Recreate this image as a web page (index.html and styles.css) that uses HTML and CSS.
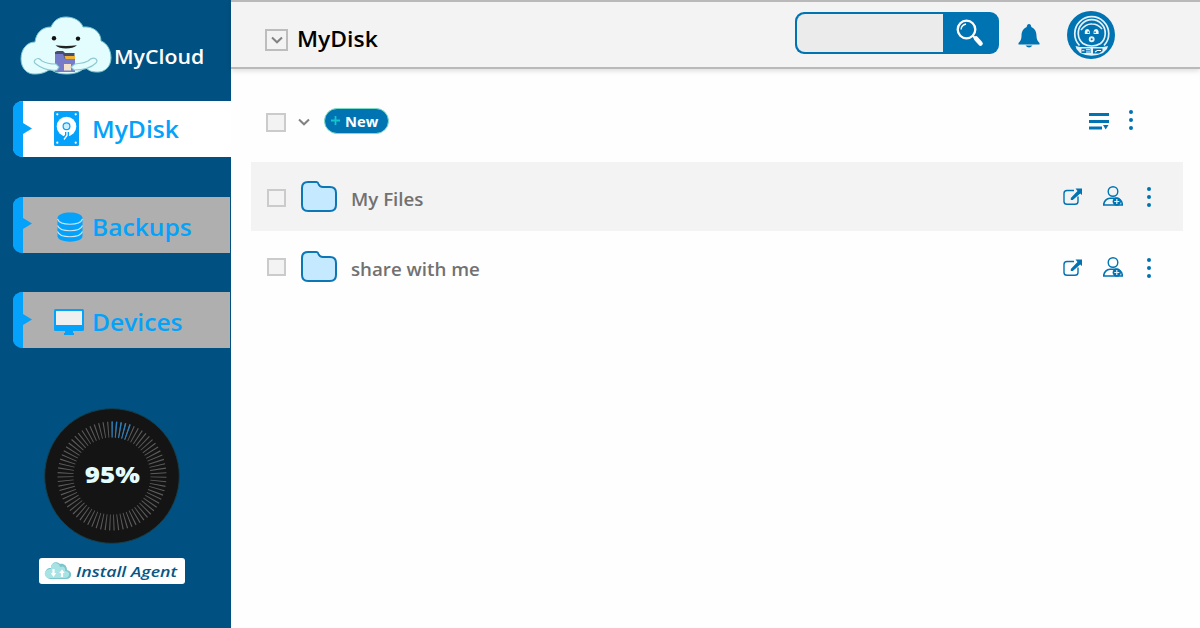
FILE: index.html
```
<!DOCTYPE html>
<html lang="en">
<head>
<meta charset="utf-8">
<title>MyCloud</title>
<link rel="stylesheet" href="styles.css">
</head>
<body>
<svg width="0" height="0" class="defs">
  <defs>
    <symbol id="folder" viewBox="0 0 36 32"><path d="M1 7Q1 1 7 1H15.500Q17 1 17.500 3Q18.500 6 22 6H29Q35 6 35 12V24Q35 30 29 30H7Q1 30 1 24Z" fill="#c5e9ff" stroke="#0d76b5" stroke-width="2"/></symbol>
    <symbol id="open" viewBox="0 0 20 18"><path d="M11 2.500H4Q1 2.500 1 5.500V13.500Q1 16.300 4 16.300H12Q15 16.300 15 13.500V8.500" fill="none" stroke="#0073b3" stroke-width="1.400"/><path d="M12.500 .5H19V7L17.200 5.500L9.800 12H7.800V10L14.500 3Z" fill="#0073b3"/></symbol>
    <symbol id="user" viewBox="0 0 20 20"><circle cx="10" cy="5.500" r="4.800" fill="none" stroke="#0073b3" stroke-width="1.400"/><path d="M.7 19C.7 15 4 12.300 7 12.300H12.500C16.500 12.300 19.300 15 19.300 19Z" fill="none" stroke="#0073b3" stroke-width="1.600"/><circle cx="13.800" cy="15.500" r="4.200" fill="#0073b3"/><path d="M13.800 13V18M11.300 15.500H16.300" stroke="#e6f2f9" stroke-width="1.200"/></symbol>
    <symbol id="more" viewBox="0 0 4 20"><circle cx="2" cy="2" r="2"/><circle cx="2" cy="10" r="2"/><circle cx="2" cy="18" r="2"/></symbol>
    <symbol id="chevron" viewBox="0 0 12 8"><path d="M1 1.500L6 6.300L11 1.500" fill="none" stroke="#828282" stroke-width="2"/></symbol>
    <symbol id="pointer" viewBox="0 0 9 11"><path d="M0 0L9 5.500L0 11Z" fill="#04a2fa"/></symbol>
  </defs>
</svg>
<div class="app">
  <aside class="sidebar">
    <div class="brand">
      <svg class="brand-logo" width="92" height="60" viewBox="0 0 92 60">
        <path d="M16 58C7 59 1 52 1 43C1 33 7 26 15 26C16 17 22 11 31 11C34 4 39 1 46 1C54 1 61 5 63 11C73 10 81 16 81 25C87 27 91 34 91 42C91 51 84 57 76 56C70 56 67 53 65 51C60 57 53 58 46 58C39 58 34 56 30 53C27 56 21 58 16 58Z" fill="#e3fdff" stroke="#78c5ce" stroke-width="1"/>
        <circle cx="34" cy="22.200" r="2.200" fill="#111"/><circle cx="58" cy="22.600" r="2.200" fill="#111"/>
        <path d="M35.500 29.300Q46 30.600 57 29.300Q53 32.500 46 32.500Q39 32.500 35.500 29.300Z" fill="#222"/>
        <path d="M35 36L37 35H43L45 37H54.500V45H35Z" fill="#474c6b"/><path d="M35 38H43L45 43H55V56H35Z" fill="#757bc8"/><path d="M44.500 40H55V43H45.500Z" fill="#f0b032"/><path d="M44 48H51V54.500H44Z" fill="#f3e1cc"/>
        <path d="M15 44C18 41 20 43 22 45C27 48 32 48 36 48L39 51L37 54C28 55 21 52 16 48Q13 46 15 44Z" fill="#e3fdff" stroke="#8fc9d1" stroke-width="1.100"/>
        <path d="M76 43C73 41 70 43 68 45C63 48 58 47 55 48L51 51L54 54C63 54 71 52 76 47Q78 45 76 43Z" fill="#e3fdff" stroke="#8fc9d1" stroke-width="1.100"/>
      </svg>
      <span class="text brand-name">MyCloud</span>
    </div>
    <nav class="nav">
      <a class="nav-item active">
        <span class="tab"></span><svg class="pointer" width="9" height="11"><use href="#pointer"/></svg>
        <svg class="nav-icon disk" width="25" height="35" viewBox="0 0 25 35"><rect width="25" height="35" rx="1.500" fill="#04a2fa"/><circle cx="12.500" cy="15.500" r="9.800" fill="#fff"/><path d="M13 21V24.500L9 29" fill="none" stroke="#04a2fa" stroke-width="4"/><circle cx="12.500" cy="15.300" r="3.400" fill="#cfeeff" stroke="#04a2fa" stroke-width="1.200"/><path d="M13 20.500V24.500L10 28.500" fill="none" stroke="#fff" stroke-width="1.300"/><g fill="#fff"><circle cx="3.300" cy="3.300" r="1.100"/><circle cx="21.700" cy="3.300" r="1.100"/><circle cx="3.300" cy="31.700" r="1.100"/><circle cx="21.700" cy="31.700" r="1.100"/></g></svg>
        <span class="text nav-label l-disk">MyDisk</span>
      </a>
      <a class="nav-item">
        <span class="tab"></span><svg class="pointer" width="9" height="11"><use href="#pointer"/></svg>
        <svg class="nav-icon backup" width="26" height="30" viewBox="0 0 26 30"><path d="M.5 6C.5-1.500 25.500-1.500 25.500 6V24C25.500 31.500.5 31.500.5 24Z" fill="#04a2fa"/><path d="M.5 7C3 14 23 14 25.500 7M.5 13.500C3 20.500 23 20.500 25.500 13.500M.5 19.500C3 26.500 23 26.500 25.500 19.500" fill="none" stroke="#d5e3ea" stroke-width="1.100"/></svg>
        <span class="text nav-label l-backup">Backups</span>
      </a>
      <a class="nav-item">
        <span class="tab"></span><svg class="pointer" width="9" height="11"><use href="#pointer"/></svg>
        <svg class="nav-icon device" width="30" height="26" viewBox="0 0 30 26"><rect width="30" height="22" rx="1.500" fill="#04a2fa"/><rect x="2" y="2" width="26" height="14" fill="#f0f0f0"/><path d="M11 22H19V24H20V26H10V24H11Z" fill="#04a2fa"/></svg>
        <span class="text nav-label l-device">Devices</span>
      </a>
    </nav>
    <div class="gauge">
      <svg width="136" height="136" viewBox="-68 -68 136 136">
        <circle r="67.300" fill="#141414" stroke="#173e49" stroke-width="1"/>
        <g transform="rotate(-90.500)">
          <circle r="46.500" fill="none" stroke="#5c5c5c" stroke-width="16" pathLength="750" stroke-dasharray="2.600 7.400"/>
          <circle r="46.500" fill="none" stroke="#2a7fbd" stroke-width="16" pathLength="750" stroke-dasharray="3 7 3 7 3 7 3 7 3 707"/>
        </g>
      </svg>
      <span class="text percent">95%</span>
    </div>
    <a class="install">
      <svg width="28" height="18" viewBox="0 0 28 18"><path d="M15 17H23C28 17 29 9 23 8C23 3 19 1 16 2C13-1 7 0 7 6C0 5-1 16 6 17Z" fill="#7cc5cc"/><path d="M5 16C-1 16-1 7 7 7C6 0 15-1 16 5C20 3 22 7 21 9C27 9 26 16 21 16Z" fill="#a7e3e4"/><path d="M9.500 7V13M18 15V9" stroke="#fff" stroke-width="2.200"/><path d="M6.700 11H12.300L9.500 15ZM15.200 11H20.800L18 7.500Z" fill="#fff"/></svg>
      <span class="text install-label">Install Agent</span>
    </a>
  </aside>
  <main class="main">
    <header class="header">
      <span class="toggle"><svg width="12" height="8"><use href="#chevron"/></svg></span>
      <h1 class="text title">MyDisk</h1>
      <div class="search">
        <span class="search-input"></span>
        <svg class="search-icon" width="28" height="28" viewBox="0 0 28 28"><circle cx="10.500" cy="10.500" r="8.800" fill="none" stroke="#fff" stroke-width="2.300"/><path d="M5 10.500Q5.500 6 10 5" fill="none" stroke="#fff" stroke-width="1.300"/><path d="M17 17L20 20" stroke="#fff" stroke-width="2"/><path d="M20 19.500L24.500 24.500" stroke="#fff" stroke-width="4.600" stroke-linecap="round"/></svg>
      </div>
      <svg class="bell" width="22" height="24" viewBox="0 0 22 24"><path d="M11 0Q13 0 13.300 3C17 4.500 18.500 8 18.500 12C18.500 15 19.500 17 21.500 19V20.500H.5V19C2.500 17 3.500 15 3.500 12C3.500 8 5 4.500 8.700 3Q9 0 11 0ZM7.500 21.500H14.500Q13 23.500 11 23.500Q9 23.500 7.500 21.500Z" fill="#0073b3"/></svg>
      <svg class="avatar" width="48" height="48" viewBox="0 0 48 48"><circle cx="24" cy="24" r="24" fill="#0073b3"/><g fill="none" stroke="#e4f1f8"><path d="M12.500 34.500A17 17 0 1 1 37 34.500" stroke-width="1.700"/><path d="M16 32.500A13.500 13.500 0 1 1 33.500 32.500Q29.500 35 24.700 35Q20 35 16 32.500Z" stroke-width="1.700"/><path d="M14 19Q19 12.500 25 13Q31 13 35 18" stroke-width="1.500"/><circle cx="24.700" cy="28.200" r="2" stroke-width="1.900"/></g><path d="M17.800 23V20.500Q18 18 20.300 18Q22.600 18 22.800 20.500V23ZM26.600 23V20.500Q26.800 18 29.100 18Q31.400 18 31.600 20.500V23Z" fill="#f0f8fc"/><path d="M20.500 20.500H22V22H20.500ZM27.300 20.500H28.800V22H27.300Z" fill="#0073b3"/><path d="M8.500 35L13 36H36L41 35L40 38L36 42Q24.500 47.500 13 42L9.500 38Z" fill="#e4f1f8"/><path d="M14.500 37.500H23.500V42H14.500ZM26 37.500H35.500V40L32 42.500H26Z" fill="#0073b3"/><path d="M15 39.700H17.500M19 38.700H23M19 41H23M28 41L30.500 39.500H34" stroke="#fff" stroke-width="1.100"/></svg>
    </header>
    <div class="toolbar">
      <span class="check"></span>
      <svg class="drop" width="12" height="8"><use href="#chevron"/></svg>
      <a class="new"><svg width="9" height="9" viewBox="0 0 9 9"><path d="M4.500 0V9M0 4.500H9" stroke="#16c4cb" stroke-width="1.800"/></svg><span class="text new-label">New</span></a>
      <svg class="sort" width="20" height="17" viewBox="0 0 20 17"><path d="M0 1.500H20M0 8.500H20M0 15H13" stroke="#0073b3" stroke-width="3"/><path d="M14 12H19.500L16.700 16.500Z" fill="#0073b3"/></svg>
      <svg class="more" width="4" height="20"><use href="#more"/></svg>
    </div>
    <ul class="files">
      <li class="file selected">
        <span class="check small"></span>
        <svg class="folder" width="36" height="32"><use href="#folder"/></svg>
        <span class="text file-name">My Files</span>
        <span class="actions"><svg width="20" height="18"><use href="#open"/></svg><svg class="user" width="20" height="20"><use href="#user"/></svg><svg class="more" width="4" height="20"><use href="#more"/></svg></span>
      </li>
      <li class="file shared">
        <span class="check small"></span>
        <svg class="folder" width="36" height="32"><use href="#folder"/></svg>
        <span class="text file-name">share with me</span>
        <span class="actions"><svg width="20" height="18"><use href="#open"/></svg><svg class="user" width="20" height="20"><use href="#user"/></svg><svg class="more" width="4" height="20"><use href="#more"/></svg></span>
      </li>
    </ul>
  </main>
</div>
</body>
</html>
```
FILE: styles.css
```
* { box-sizing: border-box; }
body { margin: 0; font-family: "Open Sans", "Noto Sans", sans-serif; background: #fefefe; }
svg { display: block; flex: none; }
.defs { position: absolute; }
.app { display: flex; width: 1200px; height: 628px; overflow: hidden; }
.text { display: block; flex: none; font-weight: 600; white-space: nowrap; transform-origin: left center; }

.sidebar { width: 231px; flex: none; background: #005081; }
.brand { display: flex; height: 101px; padding: 16px 0 0 20px; }
.brand-name { margin: 28px 0 0 2px; font-size: 19px; line-height: 26px; color: #fff; font-weight: 600; transform: scaleX(1.12); }
.nav { display: flex; flex-direction: column; gap: 39.5px; padding-left: 13px; }
.nav-item { display: flex; align-items: center; height: 56px; width: 217px; background: #afafaf; border-radius: 10px 0 0 10px; color: #04a2fa; }
.nav-item.active { width: 218px; background: #fff; }
.tab { width: 10px; height: 56px; background: #04a2fa; border-radius: 10px 0 0 10px / 8px 0 0 8px; }
.pointer { margin-top: -2px; }
.disk { margin: -1px 0 0 22px; }
.backup { margin: 4px 0 0 25px; }
.device { margin: 3px 0 0 22px; }
.nav-label { font-size: 23px; line-height: 34px; transform: scaleX(1.07); }
.l-disk { margin-left: 13px; }
.l-backup { margin: 5px 0 0 9px; }
.l-device { margin: 3px 0 0 8px; }
.gauge { display: grid; width: 136px; height: 136px; margin: 59.5px 0 0 43.5px; place-items: center; }
.gauge > * { grid-area: 1 / 1; }
.percent { margin: -3px 0 0 2px; color: #e3fdff; font-size: 23px; line-height: 30px; font-weight: 800; transform: scaleX(1.13); transform-origin: center; }
.install { display: flex; align-items: center; width: 146px; height: 26px; margin: 14.5px 0 0 39px; padding-left: 5px; background: #fff; border-radius: 3px; color: #075785; }
.install-label { margin-left: 4px; font-size: 15px; line-height: 22px; font-style: italic; font-weight: 600; transform: scaleX(1.18); }

.main { flex: 1; }
.header { display: flex; height: 69px; padding-left: 34px; background: #f3f3f3; border-top: 2px solid #b9b9b9; border-bottom: 2px solid #b9b9b9; box-shadow: 0 2px 5px rgba(0, 0, 0, .13); }
.toggle { display: grid; width: 23px; height: 22px; margin-top: 27px; border: 2px solid #bdbdbd; place-items: center; }
.title { width: 100px; margin: 22px 0 0 9px; color: #000; font-size: 21px; line-height: 30px; font-weight: 600; transform: scaleX(1.09); }
.search { display: flex; width: 204px; height: 42px; margin: 10px 0 0 398px; padding: 2px; background: #0073b3; border-radius: 9px; }
.search-input { width: 146px; height: 38px; background: #ebebeb; border-radius: 8px 0 0 8px; }
.search-icon { margin: 5px 0 0 13px; }
.bell { margin: 22px 0 0 19px; }
.avatar { margin: 9px 0 0 27px; }

.toolbar { display: flex; align-items: center; height: 93px; padding: 10px 67px 0 35px; }
.check { width: 20px; height: 19px; margin-top: 3px; background: #f3f3f3; border: 2px solid #cbcbcb; }
.drop { margin: 2px 0 0 12px; }
.new { display: flex; align-items: center; width: 65px; height: 26px; margin-left: 14px; padding-left: 6px; background: #0073b3; border: 1px solid #7edcc4; border-radius: 13px; color: #fff; }
.new-label { margin: 2px 0 0 5px; font-size: 14px; font-weight: 700; line-height: 20px; transform: scaleX(1.05); }
.sort { margin: 2px 0 0 auto; }
.sort + .more { margin: -1px 0 0 20px; }
.more { fill: #0073b3; }
.files { margin: 0; padding: 0 17px 0 20px; list-style: none; }
.file { display: flex; align-items: center; height: 69px; padding: 0 32px 0 16px; }
.selected { background: #f3f3f3; }
.small { width: 19px; height: 18px; }
.folder { margin-left: 15px; }
.file-name { margin: 4px 0 0 14px; color: #717171; font-size: 18px; line-height: 26px; font-weight: 600; transform: scaleX(1.04); }
.actions { display: flex; align-items: center; gap: 20px; margin-left: auto; }
.user { margin-top: -2px; }
.actions .more { margin-left: 4px; }
.shared .folder { margin-top: 2px; }
.shared .file-name { margin-top: 6px; }
.shared .actions { margin-top: 4px; }
```
